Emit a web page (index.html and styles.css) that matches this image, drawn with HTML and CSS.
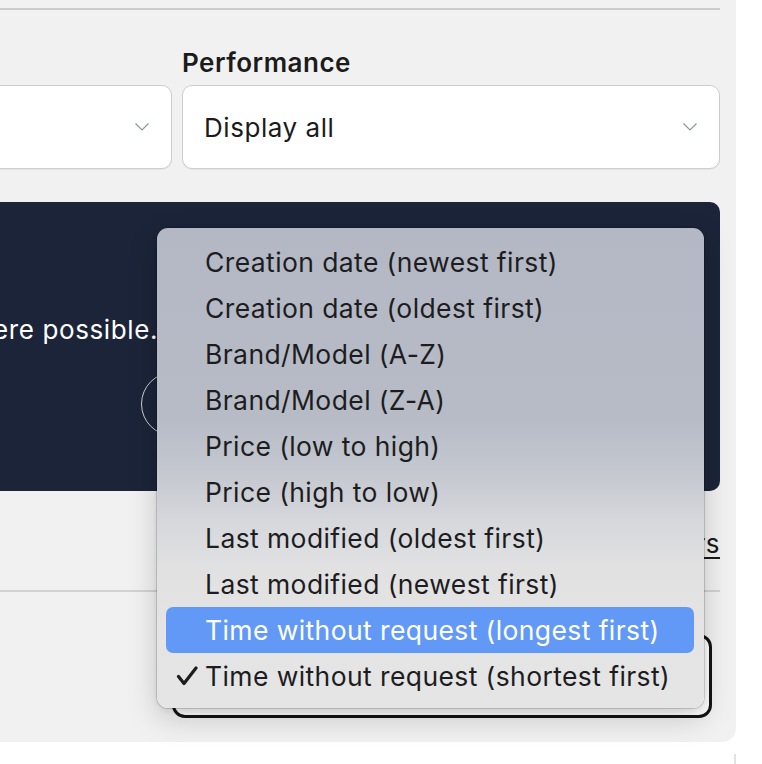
FILE: index.html
```html
<!DOCTYPE html>
<html lang="en">
<head>
<meta charset="utf-8">
<title>Requests</title>
<link rel="stylesheet" href="styles.css">
</head>
<body>
<div class="page">
  <div class="content">
    <div class="rule"></div>
    <div class="filters">
      <div class="field">
        <div class="label">Status</div>
        <div class="select">
          <span class="select-value">Display all</span>
          <svg class="chev" viewBox="0 0 14 8" width="14" height="8"><polyline points="0.5,0.5 7,7 13.5,0.5"/></svg>
        </div>
      </div>
      <div class="field">
        <div class="label">Performance</div>
        <div class="select">
          <span class="select-value">Display all</span>
          <svg class="chev" viewBox="0 0 14 8" width="14" height="8"><polyline points="0.5,0.5 7,7 13.5,0.5"/></svg>
        </div>
      </div>
    </div>
    <section class="banner">
      <p class="banner-text">Reply to requests where possible.</p>
      <button class="banner-btn" type="button">Show requests</button>
    </section>
    <div class="links"><a class="link" href="#">Reset filters</a></div>
    <div class="rule rule-light"></div>
    <div class="sort-row">
      <div class="sort-select">Time without request (shortest first)</div>
    </div>
  </div>

  <div class="menu">
    <div class="item"><span class="mark"></span>Creation date (newest first)</div>
    <div class="item"><span class="mark"></span>Creation date (oldest first)</div>
    <div class="item"><span class="mark"></span>Brand/Model (A-Z)</div>
    <div class="item"><span class="mark"></span>Brand/Model (Z-A)</div>
    <div class="item"><span class="mark"></span>Price (low to high)</div>
    <div class="item"><span class="mark"></span>Price (high to low)</div>
    <div class="item"><span class="mark"></span>Last modified (oldest first)</div>
    <div class="item"><span class="mark"></span>Last modified (newest first)</div>
    <div class="item item-active"><span class="mark"></span>Time without request (longest first)</div>
    <div class="item"><span class="mark"><svg class="check" viewBox="0 0 22 22" width="22" height="22"><polyline points="2.5,11.5 8,18.5 20,3"/></svg></span>Time without request (shortest first)</div>
  </div>
</div>
<div class="next-card"></div>
</body>
</html>
```

FILE: styles.css
```css
html, body {
  margin: 0;
  padding: 0;
  background: #ffffff;
  overflow: hidden;
}

body {
  font-family: "Inter", "Liberation Sans", sans-serif;
  color: #1b1b1b;
}

.page {
  position: relative;
  width: 736px;
  height: 742px;
  background: #f1f1f1;
  border-bottom-right-radius: 14px;
}

.content {
  margin-left: -366px;
  width: 1086px;
  padding-top: 8px;
}

.rule {
  height: 2px;
  background: #cbcbcb;
}

.rule-light {
  background: #d2d2d2;
}

.filters {
  display: grid;
  grid-template-columns: 538px 538px;
  column-gap: 10px;
  margin-top: 37px;
}

.label {
  font-size: 26px;
  line-height: 32px;
  font-weight: 600;
  letter-spacing: 0.5px;
  color: #1b1b1b;
  margin-bottom: 6px;
}

.select {
  box-sizing: border-box;
  height: 84px;
  background: #ffffff;
  border: 1.5px solid #cdcdcd;
  border-radius: 10px;
  display: flex;
  align-items: center;
  justify-content: space-between;
  padding: 0 22px 0 21px;
  box-shadow: 0 1px 1px rgba(0, 0, 0, 0.05);
}

.select-value {
  font-size: 26px;
  letter-spacing: 0.55px;
  color: #1b1b1b;
}

.chev {
  display: block;
  fill: none;
  stroke: #8796a0;
  stroke-width: 1.2;
}

.banner {
  margin-top: 33px;
  height: 289px;
  box-sizing: border-box;
  background: #1c2439;
  border-radius: 10px;
  padding-top: 112px;
}

.banner-text {
  margin: 0;
  width: 524px;
  text-align: right;
  font-size: 26px;
  line-height: 32px;
  letter-spacing: 0.6px;
  color: #ffffff;
  white-space: nowrap;
}

.banner-btn {
  display: block;
  margin: 26px 0 0 507px;
  height: 64px;
  width: 300px;
  border-radius: 32px;
  border: 1.5px solid #cfcfcf;
  background: transparent;
  color: #ffffff;
  font-family: inherit;
  font-size: 24px;
}

.links {
  margin-top: 37px;
  text-align: right;
  font-size: 26px;
  line-height: 32px;
  letter-spacing: 0.5px;
}

.link {
  color: #1b1b1b;
  text-decoration: underline;
  text-underline-offset: 4px;
  text-decoration-thickness: 1.5px;
}

.links + .rule {
  margin-top: 30px;
}

.sort-row {
  display: flex;
  justify-content: flex-end;
  padding-right: 8px;
  margin-top: 42px;
}

.sort-select {
  box-sizing: border-box;
  width: 540px;
  height: 84px;
  border: 3px solid #141414;
  border-radius: 13px;
  background: #ffffff;
  display: flex;
  align-items: center;
  padding-left: 30px;
  font-size: 26px;
}

.menu {
  position: absolute;
  left: 157px;
  top: 228px;
  width: 547px;
  height: 480px;
  box-sizing: border-box;
  padding: 11px 10px 9px 9px;
  border-radius: 11px;
  background: linear-gradient(to bottom,
    #b3b8c4 0px,
    #b6bbc6 190px,
    #c6c9d0 250px,
    #d6d8dc 295px,
    #e1e1e2 340px,
    #e4e4e4 400px,
    #e5e5e5 480px);
  box-shadow: 0 0 0 1px rgba(0, 0, 0, 0.14), 0 10px 30px rgba(0, 0, 0, 0.18), 0 2px 6px rgba(0, 0, 0, 0.08);
  font-family: "Inter", "Liberation Sans", sans-serif;
}

.item {
  display: flex;
  align-items: center;
  height: 46px;
  font-size: 26.5px;
  letter-spacing: 0.4px;
  color: #1d1d1f;
  border-radius: 7px;
  white-space: nowrap;
}

.item-active {
  background: #6299f7;
  color: #ffffff;
}

.mark {
  flex: none;
  width: 39px;
  display: flex;
  align-items: center;
  padding-left: 10px;
  box-sizing: border-box;
}

.check {
  display: block;
  fill: none;
  stroke: #1d1d1f;
  stroke-width: 3.2;
  stroke-linecap: round;
  stroke-linejoin: round;
}

.next-card {
  width: 736px;
  height: 14px;
  margin-top: 12px;
  box-sizing: border-box;
  border-right: 2px solid #e2e2e2;
}
```
